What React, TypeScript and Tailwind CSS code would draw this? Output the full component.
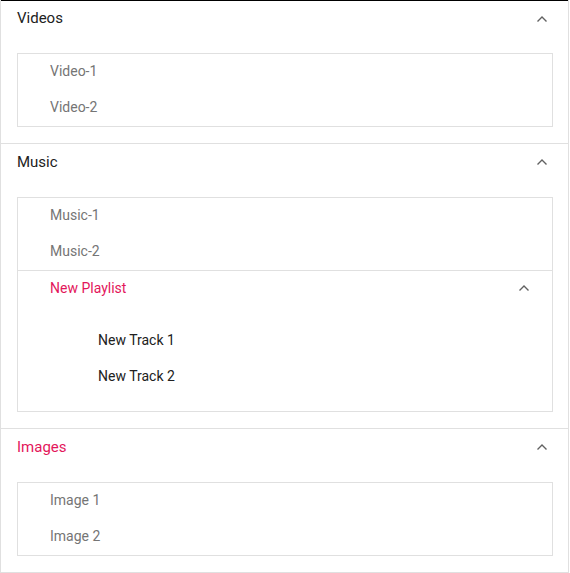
import React from "react";

function Chevron() {
  return (
    <svg width="12" height="8" viewBox="0 0 12 8" fill="none">
      <path d="M1.5 6.5L6 2l4.5 4.5" stroke="#616161" strokeWidth="1.4" />
    </svg>
  );
}

function Item({ label }: { label: string }) {
  return (
    <div className="h-9 pb-[2px] flex items-center pl-8 text-[14px] text-[#757575]">{label}</div>
  );
}

function Section({
  title,
  active,
  first,
  last,
  children,
}: {
  title: string;
  active?: boolean;
  first?: boolean;
  last?: boolean;
  children: React.ReactNode;
}) {
  return (
    <div className={last ? "" : "border-b border-[#e0e0e0]"}>
      <div
        className={`h-[37px] pb-px flex items-center justify-between pl-4 pr-[14px] ${
          first ? "border-t border-black" : ""
        }`}
      >
        <span className={`text-[15px] ${active ? "text-[#e3165b]" : "text-[#212121]"}`}>{title}</span>
        <span className="w-6 h-6 flex items-center justify-center">
          <Chevron />
        </span>
      </div>
      <div className="pt-4 pb-4 pl-4 pr-[15px]">
        <div className="border border-[#e0e0e0]">{children}</div>
      </div>
    </div>
  );
}

export default function App() {
  return (
    <div
      className="w-[569px] bg-white border-l border-r border-b border-[#e0e0e0]"
      style={{ fontFamily: "Roboto, 'Noto Sans', sans-serif" }}
    >
      <Section title="Videos" first>
        <Item label="Video-1" />
        <Item label="Video-2" />
      </Section>
      <Section title="Music">
        <Item label="Music-1" />
        <Item label="Music-2" />
        <div className="border-t border-[#e0e0e0]">
          <div className="h-9 pb-[2px] flex items-center justify-between pl-8 pr-4">
            <span className="text-[14px] text-[#e3165b]">New Playlist</span>
            <span className="w-6 h-6 flex items-center justify-center">
              <Chevron />
            </span>
          </div>
          <div className="py-4">
            <div className="h-9 pb-[2px] flex items-center pl-20 text-[14px] text-[#212121]">New Track 1</div>
            <div className="h-9 pb-[2px] flex items-center pl-20 text-[14px] text-[#212121]">New Track 2</div>
          </div>
        </div>
      </Section>
      <Section title="Images" active last>
        <Item label="Image 1" />
        <Item label="Image 2" />
      </Section>
    </div>
  );
}
